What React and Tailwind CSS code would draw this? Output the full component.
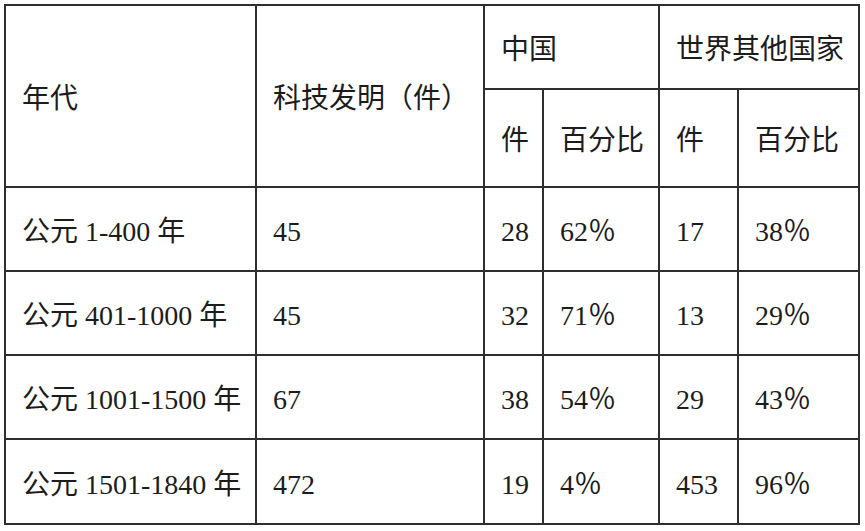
import React from 'react';

const rows = [
  { era: '公元 1-400 年', total: '45', cn: '28', cnPct: '62％', world: '17', worldPct: '38％' },
  { era: '公元 401-1000 年', total: '45', cn: '32', cnPct: '71％', world: '13', worldPct: '29％' },
  { era: '公元 1001-1500 年', total: '67', cn: '38', cnPct: '54％', world: '29', worldPct: '43％' },
  { era: '公元 1501-1840 年', total: '472', cn: '19', cnPct: '4％', world: '453', worldPct: '96％' },
];

const Cell = ({ children, className = '' }) => (
  <div className={`bg-white flex items-center pl-4 pt-[6px] ${className}`}>{children}</div>
);

const App = () => {
  return (
    <div className="w-[865px] h-[531px] bg-white pt-1 pl-1">
      <div
        className="grid w-[856px] gap-[2px] p-[2px] bg-[#2e2e2e] text-[28px] leading-none text-[#1c1c1c] whitespace-nowrap"
        style={{
          fontFamily: '"Liberation Serif", "Noto Sans CJK SC", serif',
          gridTemplateColumns: '249px 226px 57px 114px 77px 119px',
          gridTemplateRows: '82px 96px 82px 82px 82px 83px',
        }}
      >
        {/* header */}
        <Cell className="row-span-2">年代</Cell>
        <Cell className="row-span-2">科技发明（件）</Cell>
        <Cell className="col-span-2">中国</Cell>
        <Cell className="col-span-2">世界其他国家</Cell>
        <Cell>件</Cell>
        <Cell>百分比</Cell>
        <Cell>件</Cell>
        <Cell>百分比</Cell>

        {/* data */}
        {rows.map((r) => (
          <React.Fragment key={r.era}>
            <Cell>{r.era}</Cell>
            <Cell>{r.total}</Cell>
            <Cell>{r.cn}</Cell>
            <Cell>{r.cnPct}</Cell>
            <Cell>{r.world}</Cell>
            <Cell>{r.worldPct}</Cell>
          </React.Fragment>
        ))}
      </div>
    </div>
  );
};

export default App;
